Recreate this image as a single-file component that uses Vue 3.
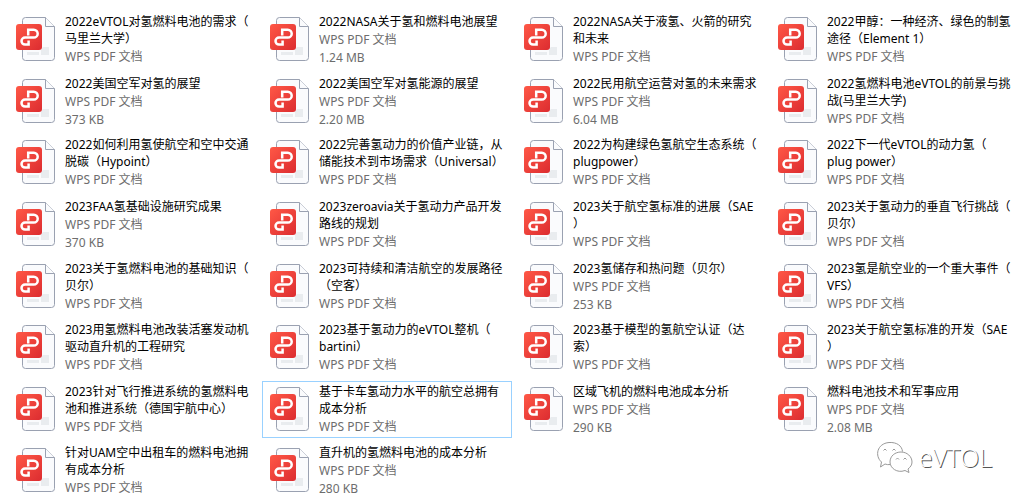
<template>
  <main class="browser">
    <ul class="files">
      <li v-for="(file, i) in files" :key="i">
        <button type="button" class="file" :class="{ selected: i === selected }" @click="selected = i">
          <svg class="icon" viewBox="0 0 40 44" aria-hidden="true">
            <defs>
              <linearGradient id="badge" x1="0" y1="0" x2="1" y2="1">
                <stop offset="0" stop-color="#ff5846" />
                <stop offset="1" stop-color="#dc2c30" />
              </linearGradient>
            </defs>
            <path class="page" d="M9.5 .5H29.5L38.5 9.5V40.5Q38.5 43.5 35.5 43.5H9.5Q6.5 43.5 6.5 40.5V3.5Q6.5 .5 9.5 .5Z" />
            <path class="page" d="M29.5 .5V9.5H38.5" />
            <path class="bars" d="M11 35H23V38H11ZM27 30H33V38H25V32Z" />
            <rect width="26" height="26" y="7" rx="3" fill="url(#badge)" />
            <path class="mark" d="M12.2 18.5V12.8H17.8A3.9 3.9 0 0 1 17.8 20.6H9A3.4 3.4 0 0 0 9 27.6H12.6V23.6" />
          </svg>
          <span class="info">
            <span v-for="line in file.name" :key="line" class="name">{{ line }}</span>
            <span class="details">
              <span class="meta">WPS PDF 文档</span>
              <span v-if="file.size" class="meta">{{ file.size }}</span>
            </span>
          </span>
        </button>
      </li>
    </ul>

    <div class="watermark">
      <svg class="wechat" viewBox="0 0 36 32" aria-hidden="true">
        <path d="M13.5 23.500Q10.500 24 8 23L3.500 26L4.500 21C-2.500 15 0 2.500 12 1.500C20 1 25 5 25.500 10.500" />
        <path d="M32 31.500L28 29.500C20 32.500 13 27 13 21C13 15 18 11 24 11C30 11 35 15.500 35 21C35 24 33.500 26 31 28Z" />
        <path d="M6.500 9.500Q8 6.500 9.500 9.500M15.500 9.500Q17 6.500 18.500 9.500M19 18.500Q20.500 15.500 22 18.500M26.500 18.500Q28 15.500 29.500 18.500" />
      </svg>
      <span>eVTOL</span>
    </div>
  </main>
</template>

<script setup>
import { ref } from 'vue';

// Index of the highlighted file
const selected = ref(25);

// Names are stored line by line, files with a short name also show their size
const files = [
  { name: ['2022eVTOL对氢燃料电池的需求（', '马里兰大学）'] },
  { name: ['2022NASA关于氢和燃料电池展望'], size: '1.24 MB' },
  { name: ['2022NASA关于液氢、火箭的研究', '和未来'] },
  { name: ['2022甲醇：一种经济、绿色的制氢', '途径（Element 1）'] },
  { name: ['2022美国空军对氢的展望'], size: '373 KB' },
  { name: ['2022美国空军对氢能源的展望'], size: '2.20 MB' },
  { name: ['2022民用航空运营对氢的未来需求'], size: '6.04 MB' },
  { name: ['2022氢燃料电池eVTOL的前景与挑', '战(马里兰大学)'] },
  { name: ['2022如何利用氢使航空和空中交通', '脱碳（Hypoint）'] },
  { name: ['2022完善氢动力的价值产业链，从', '储能技术到市场需求（Universal）'] },
  { name: ['2022为构建绿色氢航空生态系统（', 'plugpower）'] },
  { name: ['2022下一代eVTOL的动力氢（', 'plug power）'] },
  { name: ['2023FAA氢基础设施研究成果'], size: '370 KB' },
  { name: ['2023zeroavia关于氢动力产品开发', '路线的规划'] },
  { name: ['2023关于航空氢标准的进展（SAE', '）'] },
  { name: ['2023关于氢动力的垂直飞行挑战（', '贝尔）'] },
  { name: ['2023关于氢燃料电池的基础知识（', '贝尔）'] },
  { name: ['2023可持续和清洁航空的发展路径', '（空客）'] },
  { name: ['2023氢储存和热问题（贝尔）'], size: '253 KB' },
  { name: ['2023氢是航空业的一个重大事件（', 'VFS）'] },
  { name: ['2023用氢燃料电池改装活塞发动机', '驱动直升机的工程研究'] },
  { name: ['2023基于氢动力的eVTOL整机（', 'bartini）'] },
  { name: ['2023基于模型的氢航空认证（达', '索）'] },
  { name: ['2023关于航空氢标准的开发（SAE', '）'] },
  { name: ['2023针对飞行推进系统的氢燃料电', '池和推进系统（德国宇航中心）'] },
  { name: ['基于卡车氢动力水平的航空总拥有', '成本分析'] },
  { name: ['区域飞机的燃料电池成本分析'], size: '290 KB' },
  { name: ['燃料电池技术和军事应用'], size: '2.08 MB' },
  { name: ['针对UAM空中出租车的燃料电池拥', '有成本分析'] },
  { name: ['直升机的氢燃料电池的成本分析'], size: '280 KB' }
];
</script>

<style>
body {
  background: #fff;
}
</style>

<style scoped>
.browser {
  position: relative;
  display: flex;
  box-sizing: border-box;
  min-height: 100vh;
  padding: 11px 6px 0 8px;
  font-family: "Noto Sans", "Noto Sans CJK SC", sans-serif;
  font-size: 12px;
}

.files {
  flex: 1;
  display: grid;
  grid-template-columns: repeat(4, 1fr);
  grid-auto-rows: 1fr;
  gap: 4px;
  margin: 0;
  padding: 0;
  list-style: none;
}

.files li {
  display: flex;
  align-items: stretch;
  min-width: 0;
}

.file {
  flex: 1;
  display: flex;
  align-items: flex-start;
  gap: 9px;
  min-width: 0;
  padding: 1px 0 0 7px;
  border: 1px solid transparent;
  background: none;
  color: #000;
  font: inherit;
  text-align: left;
}

.file.selected {
  border-color: #99d1ff;
}

.icon {
  flex: none;
  width: 40px;
  height: 44px;
  margin-top: 4px;
}

.page {
  fill: #fafbfd;
  stroke: #9aa1b1;
  stroke-linejoin: round;
}

.bars {
  fill: #e9ecef;
}

.mark {
  fill: none;
  stroke: #fff;
  stroke-width: 2.5;
}

.info,
.details {
  display: flex;
  flex-direction: column;
}

.name {
  line-height: 17px;
  white-space: nowrap;
}

.details {
  margin-top: 1px;
}

.meta {
  color: #6d6d6d;
  line-height: 18px;
}

/* Account mark over the lower right corner */
.watermark {
  position: absolute;
  right: 34px;
  bottom: 27px;
  display: flex;
  align-items: center;
  gap: 6px;
  color: #fff;
  font-family: "Open Sans", sans-serif;
  font-size: 25px;
  font-weight: 300;
  line-height: 32px;
  text-shadow: 1px 1px 0 #555;
  pointer-events: none;
}

.wechat {
  width: 36px;
  height: 32px;
  fill: #fff;
  stroke: #999;
  stroke-width: 1;
}
</style>
